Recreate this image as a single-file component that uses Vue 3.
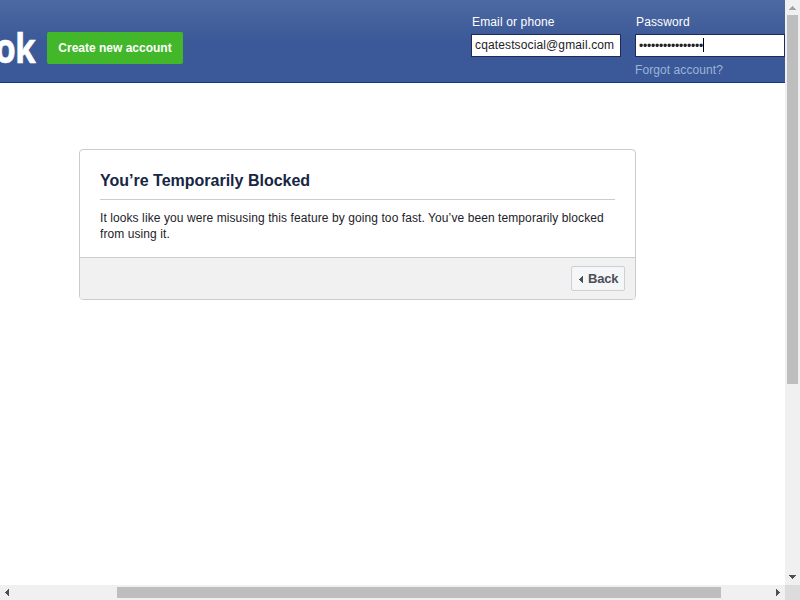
<script setup>
import { ref } from 'vue'

const email = ref('cqatestsocial@gmail.com')
const passwordMask = '•'.repeat(16)
</script>

<template>
  <div class="window">
    <div class="page">
      <header class="header">
        <div class="brand"><span class="wordmark">ok</span></div>
        <button class="create">Create new account</button>
        <form class="login" @submit.prevent>
          <label class="field">
            <span class="label">Email or phone</span>
            <span class="input">{{ email }}</span>
          </label>
          <div class="field">
            <span class="label">Password</span>
            <span class="input"><span class="dots">{{ passwordMask }}</span><i class="caret"></i></span>
            <a class="forgot">Forgot account?</a>
          </div>
        </form>
      </header>
      <main class="card">
        <div class="content">
          <h2>You’re Temporarily Blocked</h2>
          <p>It looks like you were misusing this feature by going too fast. You’ve been temporarily blocked from using it.</p>
        </div>
        <footer class="actions">
          <button class="back">
            <svg width="4" height="7" viewBox="0 0 4 7" shape-rendering="crispEdges"><path d="M4 0v7H3V6H2V5H1V4H0V3h1V2h1V1h1V0z" fill="#4b4f56" /></svg>
            <span>Back</span>
          </button>
        </footer>
      </main>
    </div>
    <div class="vbar">
      <svg class="arrow" width="7" height="4" viewBox="0 0 7 4" shape-rendering="crispEdges"><path d="M3 0h1v1h1v1h1v1h1v1H0V3h1V2h1V1h1z" fill="#a3a3a3" /></svg>
      <div class="vthumb"></div>
      <svg class="arrow down" width="7" height="4" viewBox="0 0 7 4" shape-rendering="crispEdges"><path d="M0 0h7v1H6v1H5v1H4v1H3V3H2V2H1V1H0z" fill="#505050" /></svg>
    </div>
    <div class="hbar">
      <svg width="4" height="7" viewBox="0 0 4 7" shape-rendering="crispEdges"><path d="M4 0v7H3V6H2V5H1V4H0V3h1V2h1V1h1V0z" fill="#505050" /></svg>
      <div class="hthumb"></div>
      <svg class="right" width="4" height="7" viewBox="0 0 4 7" shape-rendering="crispEdges"><path d="M0 0v7h1V6h1V5h1V4h1V3H3V2H2V1H1V0z" fill="#505050" /></svg>
    </div>
    <div class="corner"></div>
  </div>
</template>

<style>
body { margin: 0; background: #fff; overflow: hidden; }
</style>

<style scoped>
* { box-sizing: border-box; }
.window {
  display: grid;
  grid-template: 585px 15px / 785px 15px;
  width: 800px;
  height: 600px;
  font: 12px/16px "Liberation Sans", Arial, sans-serif;
  color: #1d2129;
}
.page { overflow: hidden; background: #fff; }
button { font-family: inherit; margin: 0; }
.header {
  display: flex;
  height: 83px;
  background: linear-gradient(#4e69a2, #3b5998 50%);
  border-bottom: 1px solid #133783;
}
.brand {
  display: flex;
  justify-content: flex-end;
  width: 37px;
  height: 82px;
  padding: 26px 2px 0 0;
}
.wordmark {
  flex: none;
  font: bold 42px/42px "Open Sans", sans-serif;
  letter-spacing: -1px;
  color: #fff;
  -webkit-text-stroke: .5px #fff;
  transform: scaleX(.8);
  transform-origin: right center;
}
.create {
  width: 136px;
  height: 32px;
  margin: 32px 0 0 10px;
  padding: 0;
  border: 0;
  border-radius: 2px;
  background: #42b72a;
  color: #fff;
  font-size: 12px;
  font-weight: bold;
}
.login { display: flex; gap: 14px; margin: 14px 0 0 288px; }
.field { display: block; width: 150px; }
.label { display: block; padding-left: 1px; color: #fff; letter-spacing: .14px; }
.input {
  display: flex;
  align-items: center;
  height: 23px;
  margin-top: 4px;
  padding: 0 3px 1px;
  border: 1px solid #1d2a5b;
  background: #fff;
  letter-spacing: .13px;
}
.dots { width: 64px; padding-top: 1px; letter-spacing: -.2px; }
.caret { width: 1px; height: 14px; background: #000; }
.forgot { display: block; margin-top: 5px; color: #9cb4d8; letter-spacing: .08px; }
.card {
  width: 557px;
  height: 151px;
  margin: 66px 0 0 79px;
  border: 1px solid #ccc;
  border-radius: 4px;
  overflow: hidden;
}
.content { height: 107px; padding: 20px 20px 0; }
h2 {
  height: 30px;
  margin: 0;
  border-bottom: 1px solid #ccc;
  color: #162643;
  font-size: 16px;
  line-height: 21px;
}
p { margin: 10px 0 0; letter-spacing: .086px; }
.actions {
  display: flex;
  justify-content: flex-end;
  height: 42px;
  padding: 8px 10px;
  border-top: 1px solid #ccc;
  background: #f1f1f1;
}
.back {
  display: flex;
  align-items: center;
  gap: 5px;
  width: 54px;
  height: 25px;
  padding: 0 0 0 7px;
  border: 1px solid #ced0d4;
  border-radius: 2px;
  background: #f5f6f7;
  color: #4b4f56;
  font-size: 13px;
  font-weight: bold;
  letter-spacing: -.2px;
}
.back svg { margin-top: 2px; }
.vbar {
  display: flex;
  flex-direction: column;
  align-items: center;
  padding: 6px 0;
  background: #f0f0f0;
}
.vthumb { width: 11px; height: 369px; margin-top: 5px; background: #bebebe; }
.down { margin-top: auto; }
.hbar {
  display: flex;
  align-items: center;
  padding: 0 5px;
  background: #f0f0f0;
}
.hthumb { width: 604px; height: 11px; margin-left: 108px; background: #bebebe; }
.right { margin-left: auto; }
.corner { background: #dcdcdc; }
</style>
